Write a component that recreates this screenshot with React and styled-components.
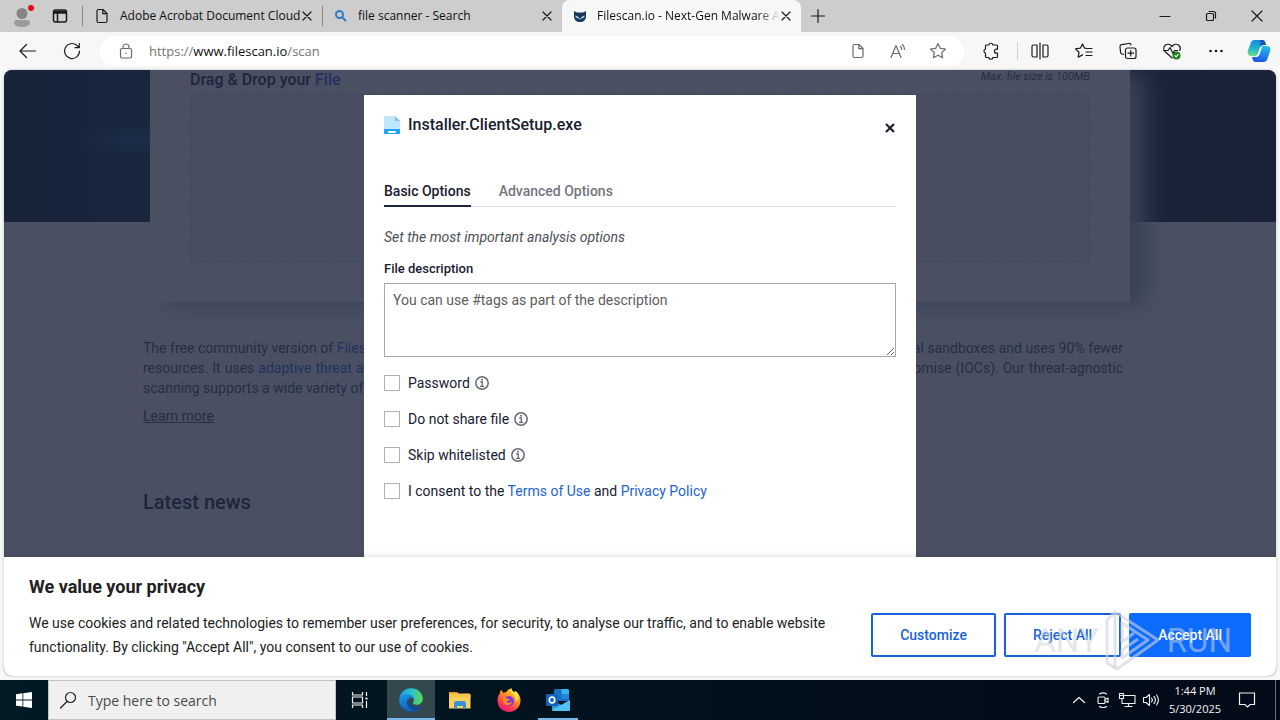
import React from "react";
import styled, { createGlobalStyle } from "styled-components";

const ui = `"Open Sans", "Noto Sans", sans-serif`;
const web = `Roboto, "Liberation Sans", sans-serif`;

const GlobalStyle = createGlobalStyle`
  *, *::before, *::after { box-sizing: border-box; }
  body { margin: 0; font-family: ${web}; font-size: 14px; color: #18202f; }
  h1, h2, p { margin: 0; }
  button { border: 0; padding: 0; background: none; font: inherit; color: inherit; }
  svg { display: block; flex: none; }
`;

const Desktop = styled.div`
  display: flex;
  flex-direction: column;
  min-height: 100vh;
  background: #f7f7f7;
`;

/* Browser chrome */

const TabStrip = styled.header`
  display: flex;
  align-items: stretch;
  height: 32px;
  background: #cdcdcd;
  color: #1b1b1b;
`;

const StripButton = styled.button`
  display: flex;
  align-items: center;
  justify-content: center;
  width: ${(p) => p.$w}px;
`;

const TabList = styled.nav`
  display: flex;
  flex: 0 1 718px;
  min-width: 0;
`;

const TabItem = styled.div`
  display: flex;
  align-items: center;
  flex: 1 1 0;
  min-width: 0;
  padding: 0 9px 0 11px;
  background: ${(p) => (p.$active ? "#f7f7f7" : "transparent")};
  border-radius: ${(p) => (p.$active ? "8px 8px 0 0" : "0")};
`;

const TabDivider = styled.span`
  width: 1px;
  height: 20px;
  margin: 6px 0;
  background: #8a8a8a;
`;

const TabTitle = styled.button`
  flex: 1;
  min-width: 0;
  margin-left: 10px;
  overflow: ${(p) => (p.$fade ? "hidden" : "visible")};
  white-space: nowrap;
  text-align: left;
  font: 12px/20px ${ui};
  color: #111;
  mask-image: ${(p) => (p.$fade ? "linear-gradient(90deg, #000 88%, transparent)" : "none")};
`;

const TabClose = styled.button`
  display: flex;
  align-items: center;
  justify-content: center;
  width: 12px;
  height: 20px;
`;

const Spacer = styled.span`
  flex: 1;
`;

const Toolbar = styled.div`
  display: flex;
  align-items: center;
  height: 38px;
  padding-left: 6px;
  background: #f7f7f7;
  color: #1b1b1b;
`;

const ToolButton = styled.button`
  display: flex;
  align-items: center;
  justify-content: center;
  width: ${(p) => p.$w || 44}px;
  height: 30px;
  color: ${(p) => (p.$muted ? "#6b6b6b" : "#1b1b1b")};
`;

const AddressBar = styled.div`
  display: flex;
  align-items: center;
  flex: 1;
  min-width: 0;
  height: 30px;
  margin: 0 5px 0 6px;
  padding: 0 6px;
  border-radius: 15px;
  background: #fff;
`;

const Address = styled.a`
  flex: 1;
  min-width: 0;
  margin-left: 3px;
  overflow: hidden;
  white-space: nowrap;
  text-decoration: none;
  font: 13px/20px ${ui};
  color: #757575;
  b { font-weight: 400; color: #111; }
`;

const ToolDivider = styled.span`
  width: 5px;
  height: 18px;
  border-right: 1px solid #cfcfcf;
`;

/* Web page */

const Viewport = styled.main`
  position: relative;
  flex: 1;
  margin: 0 4px 4px;
  overflow: hidden;
  border-radius: 8px;
  background: #fff;
  box-shadow: 0 0 2px 1px #d9dbdf;
`;

const Page = styled.div`
  min-height: 600px;
  color: #16294a;
  background:
    radial-gradient(ellipse 60px 18px at 132px 70px, #1d5080, transparent) no-repeat 0 0 / 100% 152px,
    linear-gradient(90deg, #082438, #0a2a44 12%, #0a2238 88%, #0d1c2c) no-repeat 0 0 / 100% 152px,
    #fff;
`;

const UploadCard = styled.section`
  width: 78%;
  max-width: 980px;
  margin: 0 auto;
  padding: 0 40px 40px;
  background: #fff;
  box-shadow: 16px 4px 20px #9db0c6;
`;

const UploadHead = styled.div`
  display: flex;
  align-items: flex-start;
  justify-content: space-between;
  height: 24px;
`;

const UploadTitle = styled.h2`
  font-size: 16px;
  line-height: 20px;
  font-weight: 500;
  span { color: #2f62e8; }
`;

const UploadNote = styled.em`
  font-size: 11px;
  line-height: 14px;
  color: #3c5478;
`;

const DropZone = styled.div`
  height: 168px;
  border: 1px dashed #b9c2cf;
  background: #f8f8fa;
`;

const Intro = styled.section`
  width: 78%;
  max-width: 980px;
  margin: 36px auto 0;
`;

const Shifted = styled.div`
  padding-right: 14px;
`;

const IntroLine = styled.span`
  display: block;
  white-space: nowrap;
  text-align-last: ${(p) => (p.$last ? "left" : "justify")};
`;

const IntroText = styled.p`
  font-size: 14px;
  line-height: 20px;
  color: #3c5478;
`;

const PageLink = styled.a`
  color: ${(p) => (p.$plain ? "#3c5478" : "#2a6af0")};
  text-decoration: ${(p) => (p.$plain ? "underline" : "none")};
`;

const LearnMore = styled.p`
  margin-top: 8px;
  line-height: 20px;
`;

const NewsTitle = styled.h2`
  margin-top: 62px;
  font-size: 20px;
  line-height: 28px;
  font-weight: 500;
`;

/* Scan dialog */

const Overlay = styled.div`
  position: absolute;
  inset: 0;
  display: flex;
  justify-content: center;
  padding-top: 25px;
  background: rgba(29, 36, 59, 0.8);
`;

const Dialog = styled.section`
  width: 552px;
  max-width: 90%;
  padding: 20px;
  background: #fff;
`;

const DialogHead = styled.div`
  display: flex;
  align-items: flex-start;
  gap: 8px;
  height: 61px;
`;

const DialogTitle = styled.h1`
  flex: 1;
  font-size: 16px;
  line-height: 20px;
  font-weight: 500;
`;

const CloseButton = styled.button`
  padding: 8px 1px;
`;

const OptionTabs = styled.div`
  display: flex;
  gap: 28px;
  border-bottom: 1px solid #dfe1e5;
`;

const OptionTab = styled.button`
  height: 31px;
  margin-bottom: -1px;
  font-size: 14px;
  line-height: 28px;
  font-weight: 500;
  color: ${(p) => (p.$active ? "#18202f" : "#74777e")};
  border-bottom: 2px solid ${(p) => (p.$active ? "#1d263b" : "transparent")};
`;

const Hint = styled.p`
  margin-top: 20px;
  line-height: 20px;
  font-style: italic;
  color: #4b4f57;
`;

const FieldLabel = styled.label`
  display: block;
  margin-top: 12px;
  font-size: 13px;
  line-height: 20px;
  font-weight: 500;
`;

const Description = styled.textarea`
  display: block;
  width: 100%;
  height: 74px;
  margin: 4px 0 16px;
  padding: 6px 8px;
  border: 1px solid #a9a9a9;
  border-radius: 0;
  font: 14px/20px ${web};
  &::placeholder { color: #5d5d5d; opacity: 1; }
`;

const CheckRow = styled.div`
  display: flex;
  align-items: center;
  height: 20px;
  margin-bottom: 16px;
`;

const CheckBox = styled.input`
  appearance: none;
  width: 16px;
  height: 16px;
  margin: 0 8px 0 0;
  border: 1px solid #b2b2b2;
  background: #fff;
`;

const CheckLabel = styled.label`
  margin-right: 5px;
  line-height: 20px;
  white-space: nowrap;
  a { color: #2563d4; text-decoration: none; }
`;

/* Cookie banner */

const Banner = styled.aside`
  position: absolute;
  left: 0;
  right: 0;
  bottom: 0;
  padding: 18px 25px 17px;
  background: #fff;
  box-shadow: 0 -1px 6px rgba(0, 0, 0, 0.12);
`;

const BannerTitle = styled.h2`
  margin-bottom: 12px;
  font-size: 18px;
  line-height: 24px;
  font-weight: 700;
  color: #212121;
`;

const BannerBody = styled.div`
  display: flex;
  align-items: center;
  gap: 32px;
`;

const BannerText = styled.p`
  flex: 1;
  line-height: 24px;
  color: #212121;
`;

const BannerActions = styled.div`
  display: flex;
  gap: 8px;
`;

const BannerButton = styled.button`
  height: 44px;
  padding: 0 27px;
  border: 2px solid #1863dc;
  border-color: ${(p) => (p.$solid ? "#0d6cff" : "#1863dc")};
  border-radius: 2px;
  background: ${(p) => (p.$solid ? "#0d6cff" : "#fff")};
  color: ${(p) => (p.$solid ? "#fff" : "#1863dc")};
  font-size: 14px;
  font-weight: 500;
  white-space: nowrap;
`;

const Watermark = styled.div`
  position: absolute;
  right: 44px;
  bottom: 0;
  display: flex;
  align-items: center;
  gap: 6px;
  height: 70px;
  pointer-events: none;
  font: 33px/40px ${web};
  color: rgba(205, 211, 220, 0.55);
`;

/* Taskbar */

const Taskbar = styled.footer`
  display: flex;
  align-items: stretch;
  height: 40px;
  background: linear-gradient(90deg, #021a24, #02101c 60%, #030a18);
  color: #f2f2f2;
`;

const TaskButton = styled.button`
  display: flex;
  align-items: center;
  justify-content: center;
  width: ${(p) => p.$w || 48}px;
  margin-left: ${(p) => p.$gap || 0}px;
  background: ${(p) => (p.$active ? "#34484f" : "none")};
  box-shadow: ${(p) => (p.$active ? "inset 0 -2px 0 #76b9ed" : "none")};
`;

const OpenMark = styled.span`
  display: flex;
  align-items: center;
  justify-content: center;
  width: 40px;
  height: 40px;
  box-shadow: inset 0 -2px 0 #76b9ed;
`;

const SearchBox = styled.label`
  display: flex;
  align-items: center;
  gap: 11px;
  flex: 0 1 288px;
  padding: 0 10px;
  border: 1px solid #c3c3c3;
  background: #f0f0f0;
  color: #222;
`;

const SearchInput = styled.input`
  flex: 1;
  min-width: 0;
  padding: 2px 0 0;
  border: 0;
  background: none;
  font: 14px/20px ${ui};
  &::placeholder { color: #4a4a4a; opacity: 1; }
`;

const Clock = styled.time`
  display: flex;
  flex-direction: column;
  justify-content: center;
  width: 64px;
  text-align: center;
  font: 11px/18px ${ui};
`;

const DesktopEdge = styled.span`
  width: 5px;
  margin-left: 8px;
  border-left: 1px solid #6c747c;
`;

/* Icons */

const Icon = ({ s = 20, w = 1.2, children, ...rest }) => (
  <svg width={s} height={s} viewBox={`0 0 ${s} ${s}`} fill="none" stroke="currentColor" strokeWidth={w}
    strokeLinecap="round" strokeLinejoin="round" aria-hidden="true" {...rest}>
    {children}
  </svg>
);

const Cross = () => <Icon s={12}><path d="M2 2l8 8M10 2l-8 8" /></Icon>;
const PageIcon = ({ s = 16 }) => (
  <Icon s={s}><path d="M4.500 1.500h4.500l4 4v7.500a1.500 1.500 0 0 1-1.500 1.500h-7a1.500 1.500 0 0 1-1.500-1.500v-10a1.500 1.500 0 0 1 1.500-1.500zM8.800 1.700v4h4" /></Icon>
);
const StarPath = "M10 2.500l2.300 4.800 5.200.7-3.800 3.600.9 5.200-4.600-2.500-4.600 2.500.9-5.200-3.800-3.600 5.200-.7z";

const InfoIcon = () => (
  <svg width="14" height="14" viewBox="0 0 14 14" fill="none" stroke="#666a72" role="img" aria-label="Info">
    <circle cx="7" cy="7" r="6.200" strokeWidth="1.500" />
    <path d="M5.300 6h2v4.200M5 10.400h4.200" strokeWidth="1.300" />
    <circle cx="7" cy="3.700" r="1" fill="#666a72" stroke="none" />
  </svg>
);

const EdgeIcon = () => (
  <svg width="24" height="24" viewBox="0 0 24 24" aria-hidden="true">
    <defs>
      <linearGradient id="edgeTop" x1="0" y1="0.500" x2="1" y2="0.600">
        <stop offset="0" stopColor="#1b9de2" /><stop offset="0.500" stopColor="#2bc3c8" /><stop offset="1" stopColor="#62d84e" />
      </linearGradient>
      <linearGradient id="edgeLow" x1="0" y1="0" x2="0.600" y2="1">
        <stop offset="0" stopColor="#1c9bea" /><stop offset="1" stopColor="#0b57b8" />
      </linearGradient>
    </defs>
    <path d="M.3 11C.8 4.800 5.800.2 12 .2c7 0 11.800 5 11.800 10.300 0 4.300-3.300 6.300-6.200 6.300-2.200 0-3.700-.7-3.700-1.700 0-.7 1-1.200 1-3 0-2.600-2.600-4.800-6-4.800C5 7.300 1.500 8.600.3 11z" fill="url(#edgeTop)" />
    <path d="M.2 12C.4 8.500 4 6.300 8.300 6.300c3.300 0 6.200 1.900 6.600 5-1-1.500-2.500-1.900-3.900-1.300C5.800 12.500 8 20 14.700 20c2.800 0 5.200-1 7-2.300.5-.3.900.1.600.6A12 12 0 0 1 .2 12z" fill="url(#edgeLow)" />
    <path d="M8.700 11.800C6.800 16 9.700 21.700 15.600 22.300 19 22 21 20.300 22.200 18.500c.3-.6-.1-1-.6-.7-6 3.500-12.300.6-12.900-6z" fill="#104a9c" />
  </svg>
);

const ExplorerIcon = () => (
  <svg width="22" height="19" viewBox="0 0 22 19" aria-hidden="true">
    <path d="M0 1h8l2 2H0z" fill="#e09a1c" />
    <path d="M0 2.500h20a1.500 1.500 0 0 1 1.500 1.500v13.500H0z" fill="#fbd160" />
    <path d="M0 3.500h21.500v3H0z" fill="#f7c24a" />
    <path d="M5 18v-5.500A2.500 2.500 0 0 1 7.500 10h7a2.500 2.500 0 0 1 2.500 2.500V18h-3v-3H8v3z" fill="#3a93d0" />
  </svg>
);

const FirefoxIcon = () => (
  <svg width="24" height="24" viewBox="0 0 24 24" aria-hidden="true">
    <defs>
      <linearGradient id="fox" x1="0.800" y1="0" x2="0.200" y2="1">
        <stop offset="0" stopColor="#ffe83a" /><stop offset="0.350" stopColor="#ff9a1f" />
        <stop offset="0.700" stopColor="#ff3c4f" /><stop offset="1" stopColor="#e01587" />
      </linearGradient>
    </defs>
    <path d="M3 5c0-1.200.4-2.400 1.200-3.200L6.500 5c1-.6 2-.9 3-.9C10.500 2 12.500 1 14.500.2c-.2 2 1.400 3 2.800 4.300L18.500 3c3 2 5 5.500 5 9.500C23.500 19 18.500 24 12 24S.5 19 .5 12.500C.5 9.500 1.500 7 3 5z" fill="url(#fox)" />
    <circle cx="12" cy="13" r="5" fill="#8138d8" />
    <path d="M5 10c2-1 4-.5 5.500.7l2.500.8c-1 1.500-3 1-3.500 2.300 1 1.500 3.500 1.500 5.500-.3-.5 4-6 5-8.500 1.500z" fill="#ff8a1d" />
    <path d="M14.500.2c-2 3 .5 5 2.500 7 2 2 2.500 5 1 7.500 5-4 3.500-9 .5-11.700l-1.200 1.500C15.900 3.200 14.300 2.200 14.500.2z" fill="#ffe14a" />
  </svg>
);

const OutlookIcon = () => (
  <svg width="24" height="22" viewBox="0 0 24 22" aria-hidden="true">
    <path d="M8 1.500A1.500 1.500 0 0 1 9.500 0h12A1.500 1.500 0 0 1 23 1.500V12H8z" fill="#1a6fc9" />
    <path d="M15.500 0h6A1.500 1.500 0 0 1 23 1.500V5h-7.500z" fill="#35b2ee" />
    <path d="M15.500 5H23v5h-7.500z" fill="#1f86dc" />
    <path d="M6 11l9.500 5L24 11v9.500a1.500 1.500 0 0 1-1.500 1.500h-15A1.500 1.500 0 0 1 6 20.500z" fill="#2a9fe0" />
    <path d="M6 21L24 11v9.500a1.500 1.500 0 0 1-1.500 1.500H7z" fill="#4fc1f2" />
    <rect x="0" y="5" width="12" height="12" rx="1" fill="#0f62b8" />
    <ellipse cx="6" cy="11" rx="2.700" ry="3" fill="none" stroke="#fff" strokeWidth="1.700" />
  </svg>
);

const CopilotIcon = () => (
  <svg width="24" height="24" viewBox="0 0 24 24" aria-hidden="true">
    <defs>
      <linearGradient id="copA" x1="0.500" y1="0" x2="0.300" y2="1">
        <stop offset="0" stopColor="#1389e6" /><stop offset="0.600" stopColor="#27b8c8" /><stop offset="1" stopColor="#6fdf86" />
      </linearGradient>
      <linearGradient id="copB" x1="0.700" y1="0" x2="0.400" y2="1">
        <stop offset="0" stopColor="#22bdf0" /><stop offset="1" stopColor="#1a55df" />
      </linearGradient>
    </defs>
    <path d="M7.500 1h8c1.600 0 2.300 1 2.800 2.500L19 6h-3c-1.500 0-2.300 1-2.800 2.500l-2 6C10.700 16 10 17 8.400 17H4C1 17 0 14.500 1 11.500l2.600-7.300C4.300 2 5.500 1 7.500 1z" fill="url(#copA)" />
    <path d="M16.500 23h-8c-1.600 0-2.300-1-2.800-2.500L5 18h3c1.500 0 2.300-1 2.800-2.500l2-6C13.300 8 14 7 15.600 7H20c3 0 4 2.500 3 5.500l-2.600 7.300c-.7 2.200-1.900 3.200-3.900 3.200z" fill="url(#copB)" />
    <path d="M13 1h2.500c1.600 0 2.300 1 2.800 2.500L19 6h-3c-1.300 0-2 .7-2.500 1.800z" fill="#1559b5" />
    <path d="M13 8.500L15.500 7 12.500 15.500C12 17 11 18 9.500 18H8.500L11 14.500z" fill="#fff" />
  </svg>
);

const OwlIcon = () => (
  <svg width="14" height="14" viewBox="0 0 14 14" aria-hidden="true">
    <path d="M1 2l3 1.500h6L13 2v5.500C13 11 10.500 13 7 13S1 11 1 7.500z" fill="#183a5c" />
    <path d="M2.300 6.500L7 8.300l4.700-1.800c0 1.800-1.200 2.800-2.500 2.800L7 10.500 4.800 9.300c-1.300 0-2.500-1-2.500-2.800z" fill="#a9cbe6" />
    <path d="M4 6l3 1.500L10 6 7 10z" fill="#183a5c" />
  </svg>
);

const FileIcon = () => (
  <svg width="16" height="20" viewBox="0 0 16 20" aria-hidden="true">
    <path d="M0 1h11l5 5v9H0z" fill="#bfe6fb" />
    <path d="M11 1l5 5h-4a1 1 0 0 1-1-1z" fill="#7fc3ea" />
    <path d="M0 14h16v4a1 1 0 0 1-1 1H1a1 1 0 0 1-1-1z" fill="#1ba5f2" />
    <rect x="4" y="16" width="8" height="2" rx="1" fill="#fff" />
  </svg>
);

const PlayMark = () => (
  <svg width="56" height="64" viewBox="0 0 56 64" fill="none" stroke="rgba(205,211,220,0.600)" strokeWidth="3" strokeLinejoin="round" aria-hidden="true">
    <path d="M2 11l8-8 43 28-41 29-10-6z" />
    <path d="M10 3v56M17 13v20l12-9M17 14l26 17-26 18v-8l16-11" />
  </svg>
);

const checks = [
  { id: "password", text: "Password" },
  { id: "noshare", text: "Do not share file" },
  { id: "whitelist", text: "Skip whitelisted" },
];

export default function App() {
  return (
    <Desktop>
      <GlobalStyle />
      <TabStrip>
        <StripButton $w={44} aria-label="Profile">
          <svg width="24" height="26" viewBox="0 0 24 26" aria-hidden="true">
            <circle cx="12" cy="10.500" r="5.500" fill="#858585" />
            <path d="M4 19.500c0-2 2-2.500 4-2.500h8c2 0 4 .5 4 2.500 0 3-4 4.500-8 4.500s-8-1.500-8-4.500z" fill="#9a9a9a" />
            <circle cx="21" cy="5" r="3" fill="#e00b1c" />
          </svg>
        </StripButton>
        <StripButton $w={32} aria-label="Tab actions">
          <Icon s={16} w={1.5}><rect x="1.500" y="2" width="13" height="12" rx="2" /><path d="M2 3.500h12M2 5h12M5.500 5v9" /></Icon>
        </StripButton>
        <StripButton as="span" $w={6} />
        <TabDivider />
        <TabList>
          <TabItem>
            <PageIcon />
            <TabTitle>Adobe Acrobat Document Cloud</TabTitle>
            <TabClose aria-label="Close tab"><Cross /></TabClose>
          </TabItem>
          <TabDivider />
          <TabItem>
            <svg width="14" height="14" viewBox="0 0 14 14" fill="none" stroke="#2f7dc4" strokeWidth="2" aria-hidden="true">
              <circle cx="5.500" cy="5.500" r="3.500" /><path d="M8 8l4 4" />
            </svg>
            <TabTitle>file scanner - Search</TabTitle>
            <TabClose aria-label="Close tab"><Cross /></TabClose>
          </TabItem>
          <TabItem $active>
            <OwlIcon />
            <TabTitle $fade>Filescan.io - Next-Gen Malware A</TabTitle>
            <TabClose aria-label="Close tab"><Cross /></TabClose>
          </TabItem>
        </TabList>
        <StripButton $w={34} aria-label="New tab">
          <Icon s={16}><path d="M8 1.500v13M1.500 8h13" /></Icon>
        </StripButton>
        <Spacer />
        <StripButton $w={46} aria-label="Minimize"><Icon s={12}><path d="M1 6.500h10" /></Icon></StripButton>
        <StripButton $w={46} aria-label="Restore">
          <Icon s={12}><rect x="1.500" y="3.500" width="7" height="7" rx="1" /><path d="M4 1.500h4.500a2 2 0 0 1 2 2V8" /></Icon>
        </StripButton>
        <StripButton $w={46} aria-label="Close window"><Icon s={12}><path d="M1 1l10 10M11 1L1 11" /></Icon></StripButton>
      </TabStrip>

      <Toolbar>
        <ToolButton aria-label="Back"><Icon><path d="M17.500 10H2.500M8.500 3.500L2 10l6.500 6.500" /></Icon></ToolButton>
        <ToolButton aria-label="Refresh"><Icon><path d="M17.500 10a7.500 7.500 0 1 1-2.800-5.800L17 6.500M17.300 2.500v4.200h-4.200" /></Icon></ToolButton>
        <AddressBar>
          <ToolButton $w={40} $muted aria-label="Site information">
            <Icon s={16}><rect x="2.500" y="5.500" width="11" height="9.500" rx="1.500" /><path d="M5 5.500V4a3 3 0 0 1 6 0v1.500M8 10v.5" /></Icon>
          </ToolButton>
          <Address href="#scan">https://<b>www.filescan.io</b>/scan</Address>
          <ToolButton $w={40} $muted aria-label="App available"><PageIcon /></ToolButton>
          <ToolButton $w={40} $muted aria-label="Read aloud">
            <Icon s={18}><path d="M2 15.500L7 3.500l5 12M3.800 11.500h6.400M11.500 4.500a4 4 0 0 1 1.200 3M13.500 2.500a6.500 6.500 0 0 1 2 5" /></Icon>
          </ToolButton>
          <ToolButton $w={40} $muted aria-label="Favorite"><Icon><path d={StarPath} /></Icon></ToolButton>
        </AddressBar>
        <ToolButton aria-label="Extensions">
          <Icon><path d="M5.500 4h2.200a2.200 2.200 0 0 1 4.300 0h3.500a1 1 0 0 1 1 1v3.200h-1a2 2 0 0 0 0 4h1v3.300a1 1 0 0 1-1 1H12a2.200 2.200 0 0 1-4.300 0H5.500a1 1 0 0 1-1-1v-3.300a2.200 2.200 0 0 1 0-4.200V5a1 1 0 0 1 1-1z" /></Icon>
        </ToolButton>
        <ToolDivider />
        <ToolButton aria-label="Split screen">
          <Icon><path d="M7 4H3.500A1.500 1.500 0 0 0 2 5.500v9A1.500 1.500 0 0 0 3.500 16H7zM13 4h3.500A1.500 1.500 0 0 1 18 5.500v9a1.500 1.500 0 0 1-1.500 1.500H13zM10 2v16" /></Icon>
        </ToolButton>
        <ToolButton aria-label="Favorites">
          <Icon><path d="M13 7.500l-2.400-.3L8.500 3 6.300 7.200l-4.800.7L5 11.300l-.8 4.900 4.300-2.300M12 7.500h6M12 11h6M12 14.500h6" /></Icon>
        </ToolButton>
        <ToolButton aria-label="Collections">
          <Icon><path d="M5.500 13.500L4 13a2 2 0 0 1-1.500-2L2 5.500A1.800 1.800 0 0 1 3.600 3.600L11 2.500a1.800 1.800 0 0 1 2 1.500" /><rect x="7.500" y="7" width="10.500" height="10.500" rx="2" /><path d="M12.700 9.500v5.500M10 12.200h5.500" /></Icon>
        </ToolButton>
        <ToolButton aria-label="Browser essentials">
          <Icon><path d="M10 17L3 10.500a4.300 4.300 0 0 1 0-6 4.200 4.200 0 0 1 6 0l1 1 1-1a4.200 4.200 0 0 1 6 0 4.300 4.300 0 0 1 .8 5M1.500 9.500H6L8 6.500l3 6 1.500-3h3" /><circle cx="14.500" cy="14.500" r="4" fill="#128012" stroke="none" /><path d="M13 14.700l1.200 1.100 2-2.300" stroke="#fff" /></Icon>
        </ToolButton>
        <ToolButton aria-label="More">
          <Icon><g fill="currentColor" stroke="none"><circle cx="4.500" cy="10" r="1.300" /><circle cx="10" cy="10" r="1.300" /><circle cx="15.500" cy="10" r="1.300" /></g></Icon>
        </ToolButton>
        <ToolButton $w={42} aria-label="Copilot"><CopilotIcon /></ToolButton>
      </Toolbar>

      <Viewport>
        <Page>
          <UploadCard>
            <UploadHead>
              <UploadTitle>Drag &amp; Drop your <span>File</span></UploadTitle>
              <UploadNote>Max. file size is 100MB</UploadNote>
            </UploadHead>
            <DropZone />
          </UploadCard>
          <Shifted>
            <Intro>
              <IntroText>
                <IntroLine>The free community version of <PageLink href="#about">Filescan.io</PageLink> engine is up to ten times faster and more efficient compared to the most traditional sandboxes and uses 90% fewer</IntroLine>
                <IntroLine>resources. It uses <PageLink href="#technology">adaptive threat analysis</PageLink> technology to find zero-day malware and extract many more indicators of compromise (IOCs). Our threat-agnostic</IntroLine>
                <IntroLine $last>scanning supports a wide variety of file types.</IntroLine>
              </IntroText>
              <LearnMore><PageLink $plain href="#more">Learn more</PageLink></LearnMore>
              <NewsTitle>Latest news</NewsTitle>
            </Intro>
          </Shifted>
        </Page>

        <Overlay>
          <Dialog role="dialog" aria-labelledby="dialog-title">
            <DialogHead>
              <FileIcon />
              <DialogTitle id="dialog-title">Installer.ClientSetup.exe</DialogTitle>
              <CloseButton aria-label="Close">
                <Icon s={10} w={2.2} strokeLinecap="butt"><path d="M1 1l8 8M9 1L1 9" /></Icon>
              </CloseButton>
            </DialogHead>
            <OptionTabs>
              <OptionTab $active>Basic Options</OptionTab>
              <OptionTab>Advanced Options</OptionTab>
            </OptionTabs>
            <Hint>Set the most important analysis options</Hint>
            <FieldLabel htmlFor="description">File description</FieldLabel>
            <Description id="description" placeholder="You can use #tags as part of the description" />
            {checks.map((c) => (
              <CheckRow key={c.id}>
                <CheckBox type="checkbox" id={c.id} />
                <CheckLabel htmlFor={c.id}>{c.text}</CheckLabel>
                <InfoIcon />
              </CheckRow>
            ))}
            <CheckRow>
              <CheckBox type="checkbox" id="consent" />
              <CheckLabel htmlFor="consent">
                I consent to the <a href="#terms">Terms of Use</a> and <a href="#privacy">Privacy Policy</a>
              </CheckLabel>
            </CheckRow>
          </Dialog>
        </Overlay>

        <Banner>
          <BannerTitle>We value your privacy</BannerTitle>
          <BannerBody>
            <BannerText>
              We use cookies and related technologies to remember user preferences, for security, to analyse our traffic, and to enable website functionality. By clicking "Accept All", you consent to our use of cookies.
            </BannerText>
            <BannerActions>
              <BannerButton>Customize</BannerButton>
              <BannerButton>Reject All</BannerButton>
              <BannerButton $solid>Accept All</BannerButton>
            </BannerActions>
          </BannerBody>
          <Watermark aria-hidden="true"><span>ANY</span><PlayMark /><span>RUN</span></Watermark>
        </Banner>
      </Viewport>

      <Taskbar>
        <TaskButton aria-label="Start">
          <svg width="16" height="16" viewBox="0 0 16 16" fill="#fff" aria-hidden="true">
            <path d="M0 2.200l6.500-.9v6.200H0zM7.300 1.200L16 0v7.500H7.300zM0 8.400h6.500v6.200L0 13.700zM7.300 8.400H16V16l-8.700-1.200z" />
          </svg>
        </TaskButton>
        <SearchBox>
          <Icon s={18}><circle cx="11.500" cy="6.500" r="5" /><path d="M8 10.500L1.500 17" /></Icon>
          <SearchInput type="text" aria-label="Search" placeholder="Type here to search" />
        </SearchBox>
        <TaskButton aria-label="Task view">
          <Icon s={18} strokeLinecap="butt"><path d="M1.500 1v3h10V1M1.500 17v-3h10v3M1.500 6h10v6h-10zM15.500 1v4M15.500 10v7" /><rect x="14.500" y="6.500" width="2" height="2" fill="currentColor" stroke="none" /></Icon>
        </TaskButton>
        <TaskButton $gap={3} $active aria-label="Edge"><EdgeIcon /></TaskButton>
        <TaskButton $gap={1} aria-label="File Explorer"><ExplorerIcon /></TaskButton>
        <TaskButton $gap={1} aria-label="Firefox"><FirefoxIcon /></TaskButton>
        <TaskButton $gap={1} aria-label="Outlook"><OpenMark><OutlookIcon /></OpenMark></TaskButton>
        <Spacer />
        <TaskButton $w={24} aria-label="Hidden icons"><Icon s={14}><path d="M1.500 9.500L7 4.500l5.500 5" /></Icon></TaskButton>
        <TaskButton $w={24} aria-label="Meet now">
          <Icon s={16} w={1.1}><rect x="3" y="5" width="7" height="6.500" rx="1" /><path d="M10 7.500l3-1.500v4.500L10 9M4.500 2c2-1.300 5-1.300 7 0M4.500 14.500c2 1.300 5 1.300 7 0" /></Icon>
        </TaskButton>
        <TaskButton $w={24} aria-label="Network">
          <Icon s={18} w={1.1}><path d="M6.500 4.500H17v8H4v-5M10.500 12.500v3M7 15.500h7" /><rect x="1.500" y="2.500" width="4" height="5" /><path d="M2.500 4.500h2" /></Icon>
        </TaskButton>
        <TaskButton $w={24} aria-label="Volume">
          <Icon s={18} w={1.1}><path d="M1.500 6.500H4l3.500-3v11L4 11.500H1.500zM9.500 7a3 3 0 0 1 0 4M12 5.500a5 5 0 0 1 0 7M14.500 4a7.500 7.500 0 0 1 0 10" /></Icon>
        </TaskButton>
        <Clock><span>1:44 PM</span><span>5/30/2025</span></Clock>
        <TaskButton $w={40} aria-label="Notifications">
          <Icon s={18} strokeLinejoin="miter"><path d="M1.500 2h15v11.500H12L9.500 16 7 13.500H1.500z" /></Icon>
        </TaskButton>
        <DesktopEdge />
      </Taskbar>
    </Desktop>
  );
}
